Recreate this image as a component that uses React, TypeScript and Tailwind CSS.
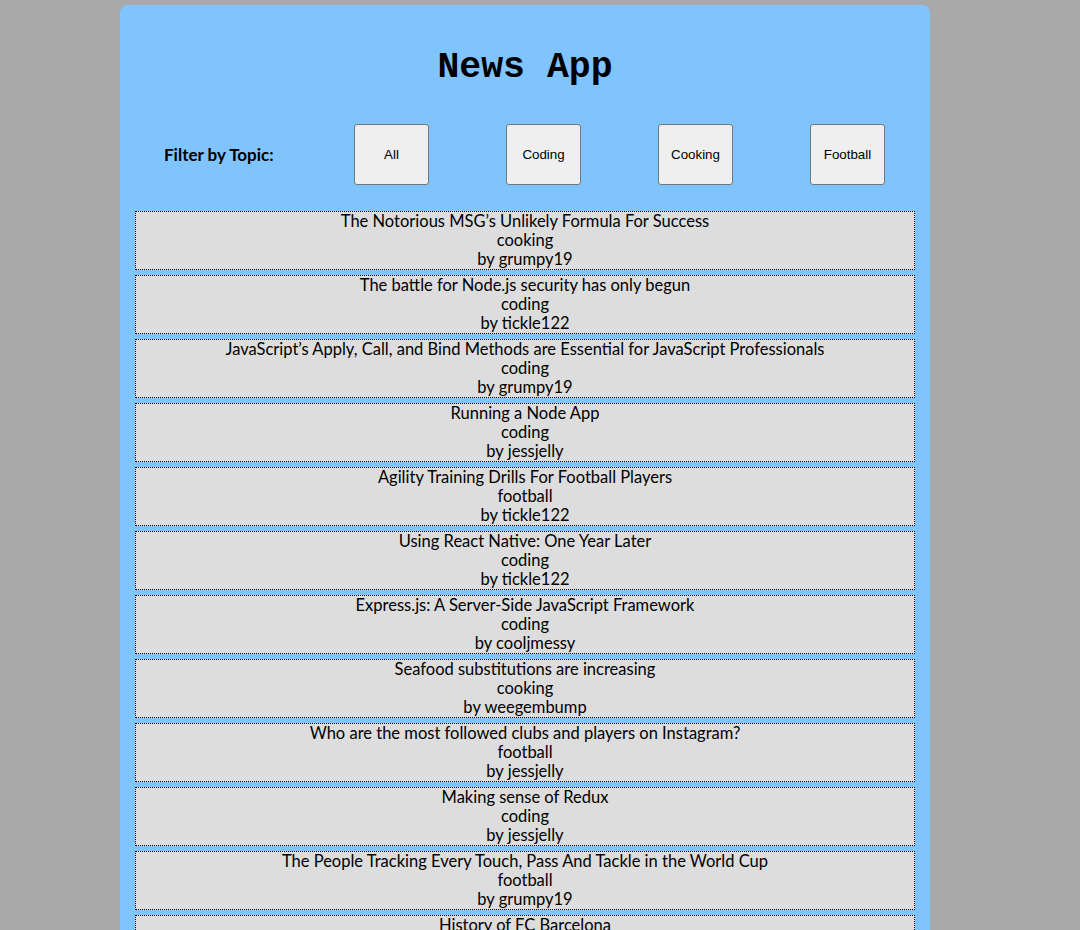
import { useState } from "react";

interface Article {
    title: string;
    topic: string;
    author: string;
}

const articles: Article[] = [
    { title: "The Notorious MSG\u2019s Unlikely Formula For Success", topic: "cooking", author: "grumpy19" },
    { title: "The battle for Node.js security has only begun", topic: "coding", author: "tickle122" },
    { title: "JavaScript\u2019s Apply, Call, and Bind Methods are Essential for JavaScript Professionals", topic: "coding", author: "grumpy19" },
    { title: "Running a Node App", topic: "coding", author: "jessjelly" },
    { title: "Agility Training Drills For Football Players", topic: "football", author: "tickle122" },
    { title: "Using React Native: One Year Later", topic: "coding", author: "tickle122" },
    { title: "Express.js: A Server-Side JavaScript Framework", topic: "coding", author: "cooljmessy" },
    { title: "Seafood substitutions are increasing", topic: "cooking", author: "weegembump" },
    { title: "Who are the most followed clubs and players on Instagram?", topic: "football", author: "jessjelly" },
    { title: "Making sense of Redux", topic: "coding", author: "jessjelly" },
    { title: "The People Tracking Every Touch, Pass And Tackle in the World Cup", topic: "football", author: "grumpy19" },
    { title: "History of FC Barcelona", topic: "football", author: "jessjelly" },
];

const topics = ["All", "Coding", "Cooking", "Football"];

export default function App() {
    const [topic, setTopic] = useState("All");

    const shown = topic === "All" ? articles : articles.filter(a => a.topic === topic.toLowerCase());

    return (
        <div className="h-[930px] overflow-hidden bg-[#a9a9a9] pt-[5px]">
            <div className="ml-[120px] w-[810px] min-h-[925px] rounded-t-lg bg-[#80c4ff] px-[15px]">
                <h1 className="pt-[43px] text-center text-[36.5px] leading-[40px] font-bold text-black font-['Liberation_Mono',monospace]">
                    News App
                </h1>

                <div className="mt-[36px] flex items-center pl-[29px]">
                    <span className="w-[190px] text-[17px] font-bold text-black font-['Lato',sans-serif]">
                        Filter by Topic:
                    </span>
                    <div className="flex gap-[77px]">
                        {topics.map(t => (
                            <button
                                key={t}
                                onClick={() => setTopic(t)}
                                className="h-[61px] w-[75px] rounded-[3px] border border-[#767676] bg-[#efefef] text-[13.33px] text-black font-['Liberation_Sans',sans-serif]"
                            >
                                {t}
                            </button>
                        ))}
                    </div>
                </div>

                <ul className="mt-[26px] flex flex-col gap-[5px]">
                    {shown.map(a => (
                        <li
                            key={a.title}
                            className="border border-dotted border-black bg-[#dddddd] text-center text-[16.5px] leading-[19px] text-black font-['Lato',sans-serif]"
                        >
                            <p>{a.title}</p>
                            <p>{a.topic}</p>
                            <p>by {a.author}</p>
                        </li>
                    ))}
                </ul>
            </div>
        </div>
    );
}
